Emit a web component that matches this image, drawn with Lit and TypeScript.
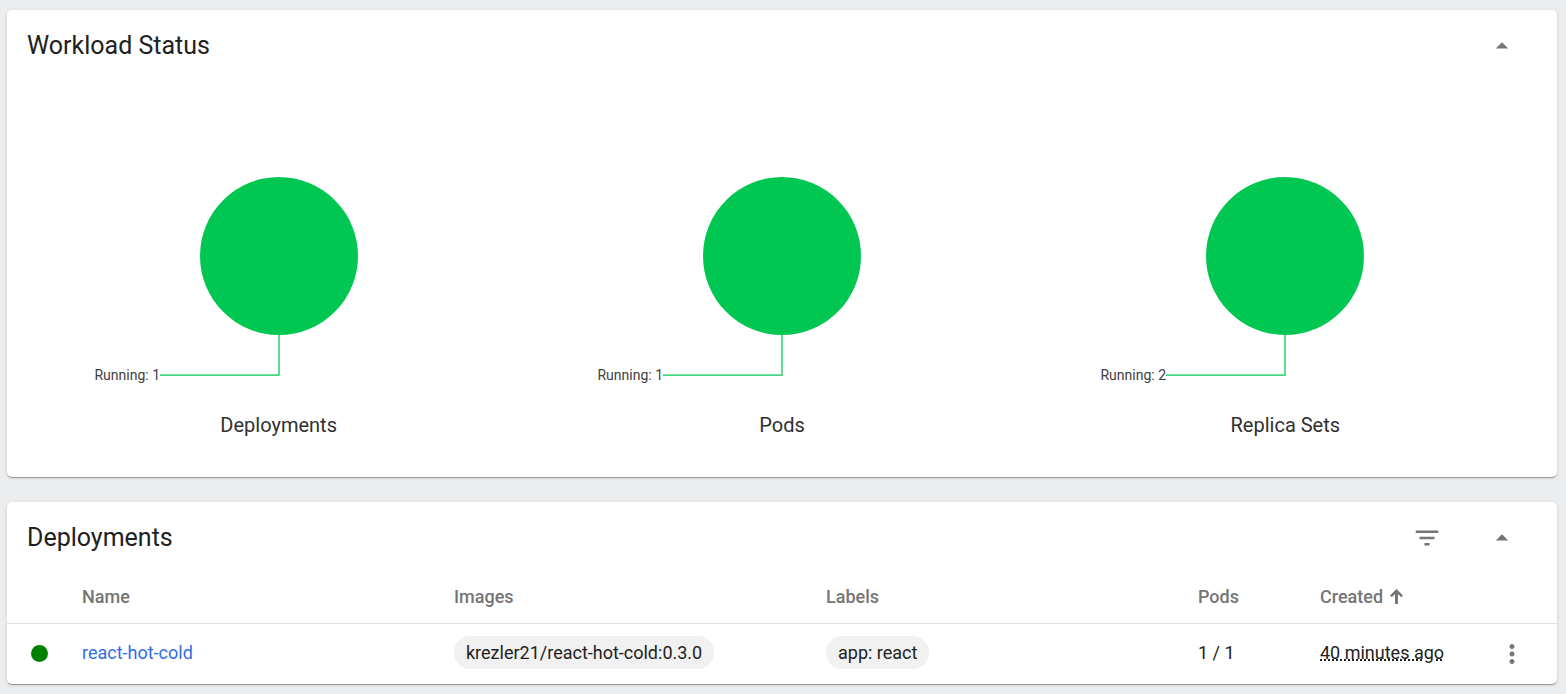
import { LitElement, html, css, svg } from "lit";
import { customElement, property } from "lit/decorators.js";

interface Status {
  title: string;
  running: number;
}

interface Deployment {
  name: string;
  image: string;
  label: string;
  pods: string;
  created: string;
}

const STATUSES: Status[] = [
  { title: "Deployments", running: 1 },
  { title: "Pods", running: 1 },
  { title: "Replica Sets", running: 2 },
];

const DEPLOYMENTS: Deployment[] = [
  {
    name: "react-hot-cold",
    image: "krezler21/react-hot-cold:0.3.0",
    label: "app: react",
    pods: "1 / 1",
    created: "40 minutes ago",
  },
];

const ICONS = {
  collapse: svg`<path d="M7 14l5-5 5 5z"></path>`,
  filter: svg`<path d="M10 18h4v-2h-4v2zM3 6v2h18V6H3zm3 7h12v-2H6v2z"></path>`,
  more: svg`<path d="M12 8c1.100 0 2-.9 2-2s-.9-2-2-2-2 .9-2 2 .9 2 2 2zm0 2c-1.100 0-2 .9-2 2s.9 2 2 2 2-.9 2-2-.9-2-2-2zm0 6c-1.100 0-2 .9-2 2s.9 2 2 2 2-.9 2-2-.9-2-2-2z"></path>`,
};

@customElement("dash-card")
class DashCard extends LitElement {
  @property() heading = "";

  static styles = css`
    :host {
      display: block;
      background: #fff;
      border-radius: 5px;
      box-shadow:
        0 2px 1px -1px rgba(0, 0, 0, 0.2),
        0 1px 1px 0 rgba(0, 0, 0, 0.14),
        0 1px 4px 0 rgba(0, 0, 0, 0.12);
    }
    .head {
      display: flex;
      align-items: center;
      height: 71px;
      padding: 0 40px 0 20px;
    }
    .heading {
      flex: 1;
      margin: 0;
      font-size: 25px;
      font-weight: 400;
      line-height: 33px;
    }
    .actions {
      display: flex;
      gap: 45px;
    }
    button {
      display: flex;
      padding: 0;
      border: 0;
      background: none;
      color: #757575;
      cursor: pointer;
    }
    svg {
      display: block;
      width: 30px;
      height: 30px;
      fill: currentColor;
    }
  `;

  render() {
    return html`
      <div class="head">
        <h2 class="heading">${this.heading}</h2>
        <div class="actions">
          <slot name="actions"></slot>
          <button type="button" aria-label="Collapse">
            <svg viewBox="0 0 24 24">${ICONS.collapse}</svg>
          </button>
        </div>
      </div>
      <slot></slot>
    `;
  }
}

@customElement("status-chart")
class StatusChart extends LitElement {
  @property() heading = "";
  @property({ type: Number }) running = 0;

  static styles = css`
    :host {
      display: flex;
      flex-direction: column;
      align-items: center;
      gap: 12px;
      min-width: 0;
      color: #303030;
    }
    svg {
      display: block;
      width: 400px;
      max-width: 100%;
      height: 320px;
    }
    .disc {
      fill: #00c752;
    }
    .leader {
      fill: none;
      stroke: #00c752;
      stroke-width: 1.250;
    }
    .value {
      fill: #404040;
      font-size: 14px;
      text-anchor: end;
    }
    .title {
      font-size: 20px;
      line-height: 24px;
    }
  `;

  render() {
    return html`
      <svg viewBox="0 0 400 320" role="img" aria-label=${this.heading}>
        <circle class="disc" cx="200" cy="175" r="79"></circle>
        <path class="leader" d="M200 254V294H81"></path>
        <text class="value" x="81" y="299">Running: ${this.running}</text>
      </svg>
      <div class="title">${this.heading}</div>
    `;
  }
}

@customElement("app-root")
class AppRoot extends LitElement {
  static styles = css`
    :host {
      display: flex;
      flex-direction: column;
      gap: 25px;
      box-sizing: border-box;
      min-height: 100vh;
      padding: 10px 9px 10px 7px;
      background: #ecedef;
      color: #212121;
      font-family: Roboto, "Liberation Sans", sans-serif;
      font-size: 18px;
    }
    .charts {
      display: grid;
      grid-template-columns: repeat(3, 1fr);
      padding: 0 20px 40px;
    }
    table {
      width: 100%;
      border-collapse: collapse;
      table-layout: fixed;
    }
    th,
    td {
      box-sizing: border-box;
      padding: 0 0 2px;
      font-weight: 400;
      text-align: left;
      line-height: 24px;
      white-space: nowrap;
    }
    th {
      height: 50px;
      border-bottom: 1px solid #e0e0e0;
      color: #757575;
      font-weight: 500;
    }
    td {
      height: 61px;
    }
    .graphic {
      padding: 0;
    }
    .state {
      width: 75px;
    }
    .pods {
      width: 122px;
    }
    .created {
      width: 177px;
    }
    .menu {
      width: 60px;
    }
    .dot {
      display: block;
      width: 17px;
      height: 17px;
      margin-left: 24px;
      border-radius: 50%;
      background: #008000;
    }
    .link {
      color: #326de6;
      text-decoration: none;
    }
    .chip {
      display: inline-block;
      padding: 4px 12px;
      border-radius: 16px;
      background: #f1f1f1;
      line-height: 25px;
    }
    .ago {
      text-decoration: underline dotted;
    }
    button {
      display: flex;
      padding: 0;
      border: 0;
      background: none;
      color: #757575;
      font: inherit;
      cursor: pointer;
    }
    .sort {
      align-items: center;
      gap: 7px;
    }
    .arrow {
      width: 13px;
      height: 16px;
      fill: currentColor;
    }
    .icon {
      display: block;
      width: 30px;
      height: 30px;
      fill: currentColor;
    }
  `;

  private row(d: Deployment) {
    return html`
      <tr>
        <td class="graphic"><span class="dot" role="img" aria-label="Running"></span></td>
        <td><a class="link" href="#">${d.name}</a></td>
        <td><span class="chip">${d.image}</span></td>
        <td><span class="chip">${d.label}</span></td>
        <td>${d.pods}</td>
        <td><span class="ago">${d.created}</span></td>
        <td class="graphic">
          <button type="button" aria-label="Actions">
            <svg class="icon" viewBox="0 0 24 24">${ICONS.more}</svg>
          </button>
        </td>
      </tr>
    `;
  }

  render() {
    return html`
      <dash-card heading="Workload Status">
        <div class="charts">
          ${STATUSES.map(
            (s) => html`<status-chart heading=${s.title} running=${s.running}></status-chart>`,
          )}
        </div>
      </dash-card>
      <dash-card heading="Deployments">
        <button slot="actions" type="button" aria-label="Filter">
          <svg class="icon" viewBox="0 0 24 24">${ICONS.filter}</svg>
        </button>
        <table>
          <thead>
            <tr>
              <th class="state"></th>
              <th>Name</th>
              <th>Images</th>
              <th>Labels</th>
              <th class="pods">Pods</th>
              <th class="created">
                <button class="sort" type="button">
                  Created
                  <svg class="arrow" viewBox="0 0 13 16">
                    <path d="M6.500 0L13 6.500L11.200 8.300L8 5.100V15H5V5.100L1.800 8.300L0 6.500z"></path>
                  </svg>
                </button>
              </th>
              <th class="menu"></th>
            </tr>
          </thead>
          <tbody>
            ${DEPLOYMENTS.map((d) => this.row(d))}
          </tbody>
        </table>
      </dash-card>
    `;
  }
}
